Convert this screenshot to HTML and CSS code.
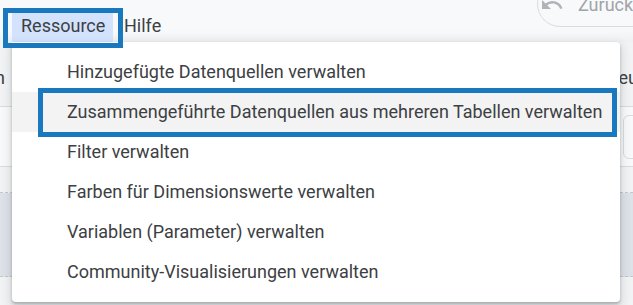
FILE: index.html
```html
<!DOCTYPE html>
<html lang="de">
<head>
<meta charset="utf-8">
<link rel="stylesheet" href="styles.css">
</head>
<body>
<div class="page">
  <header class="topbar">
    <nav class="menubar">
      <span class="menu-item active">Ressource</span>
      <span class="menu-item">Hilfe</span>
    </nav>
    <button class="undo-btn" type="button">
      <svg class="undo-icon" viewBox="0 0 24 24" width="24" height="24"><path d="M12.5 8c-2.65 0-5.05.99-6.9 2.6L2 7v9h9l-3.62-3.62c1.39-1.16 3.16-1.88 5.12-1.88 3.54 0 6.55 2.31 7.6 5.5l2.37-.78C21.08 11.03 17.15 8 12.5 8z" fill="#b0b4b9"/></svg>
      <span>Zurück</span>
    </button>
  </header>
  <section class="toolbar">
    <span class="tb-left">n</span>
    <span class="tb-right">Neu</span>
  </section>
  <section class="row-a"><span class="field"></span></section>
  <section class="row-b"></section>
  <section class="row-c"></section>
  <section class="row-d"></section>

  <ul class="dropdown">
    <li class="dd-item">Hinzugefügte Datenquellen verwalten</li>
    <li class="dd-item hover">Zusammengeführte Datenquellen aus mehreren Tabellen verwalten</li>
    <li class="dd-item">Filter verwalten</li>
    <li class="dd-item">Farben für Dimensionswerte verwalten</li>
    <li class="dd-item">Variablen (Parameter) verwalten</li>
    <li class="dd-item">Community-Visualisierungen verwalten</li>
  </ul>

  <div class="callout callout-menu"></div>
  <div class="callout callout-item"></div>
</div>
</body>
</html>
```
FILE: styles.css
```css
* { box-sizing: border-box; }
html, body { margin: 0; padding: 0; }
body {
  width: 633px;
  height: 305px;
  overflow: hidden;
  font-family: Roboto, "Open Sans", "Liberation Sans", sans-serif;
  color: #3c4043;
  background: #f8f9fa;
}
.page {
  position: relative;
  width: 633px;
  height: 305px;
  overflow: hidden;
}
.topbar {
  height: 42px;
  display: flex;
  justify-content: space-between;
  background: linear-gradient(#f8f9fa 0, #f8f9fa 30px, #eef0f2 42px);
}
.menubar {
  display: flex;
  align-items: flex-end;
  padding-left: 12px;
}
.menu-item {
  font-size: 18px;
  line-height: 32px;
  height: 32px;
  padding: 0 8px;
  color: #3c4043;
}
.menu-item.active {
  background: #d3e3fd;
  border-radius: 4px 4px 0 0;
  width: 101px;
  padding-left: 9px;
}
.menu-item + .menu-item { padding-left: 11px; }
.undo-btn {
  margin-top: -19px;
  height: 46px;
  width: 120px;
  margin-right: -24px;
  display: flex;
  align-items: center;
  gap: 14px;
  padding: 0 0 0 2px;
  border: 1px solid #dadce0;
  border-radius: 23px;
  background: #f8f9fa;
  font-family: inherit;
  font-size: 18px;
  color: #a0a4a9;
}
.undo-icon { flex: none; margin-top: 2px; }
.toolbar {
  height: 65px;
  display: flex;
  justify-content: space-between;
  align-items: center;
  padding-top: 6px;
  background: #f1f3f4;
  border-bottom: 1px solid #dadce0;
  font-size: 18px;
  color: #3c4043;
}
.tb-left { margin-left: -5px; }
.tb-right { margin-right: -5px; }
.row-a {
  height: 60px;
  display: flex;
  justify-content: flex-end;
  align-items: center;
  border-bottom: 1px solid #dadce0;
  background: #f8f9fa;
}
.field {
  width: 20px;
  height: 44px;
  margin-right: -10px;
  border: 1px solid #dadce0;
  border-radius: 6px;
}
.row-b {
  height: 26px;
  border-bottom: 1px dashed #c4c7cc;
  background: #f1f3f4;
}
.row-c {
  height: 84px;
  background: #dde1e8;
  border-bottom: 1px dashed #c4c7cc;
}
.row-d {
  height: 30px;
  background: #f1f3f4;
}
.dropdown {
  position: absolute;
  left: 12px;
  top: 42px;
  width: 608px;
  margin: 0;
  padding: 10px 0;
  list-style: none;
  background: #fff;
  border-radius: 0 4px 4px 4px;
  box-shadow: 0 2px 3px rgba(60,64,67,.3), 0 4px 10px 2px rgba(60,64,67,.15);
}
.dd-item {
  height: 40px;
  line-height: 40px;
  padding-left: 55px;
  font-size: 18px;
  color: #3c4043;
  white-space: nowrap;
}
.dd-item.hover { background: #f3f3f3; }
.callout {
  position: absolute;
  border: 5px solid #1a78be;
}
.callout-menu {
  left: 3px;
  top: 8px;
  width: 120px;
  height: 40px;
}
.callout-item {
  left: 38px;
  top: 88px;
  width: 579px;
  height: 49px;
}
```
